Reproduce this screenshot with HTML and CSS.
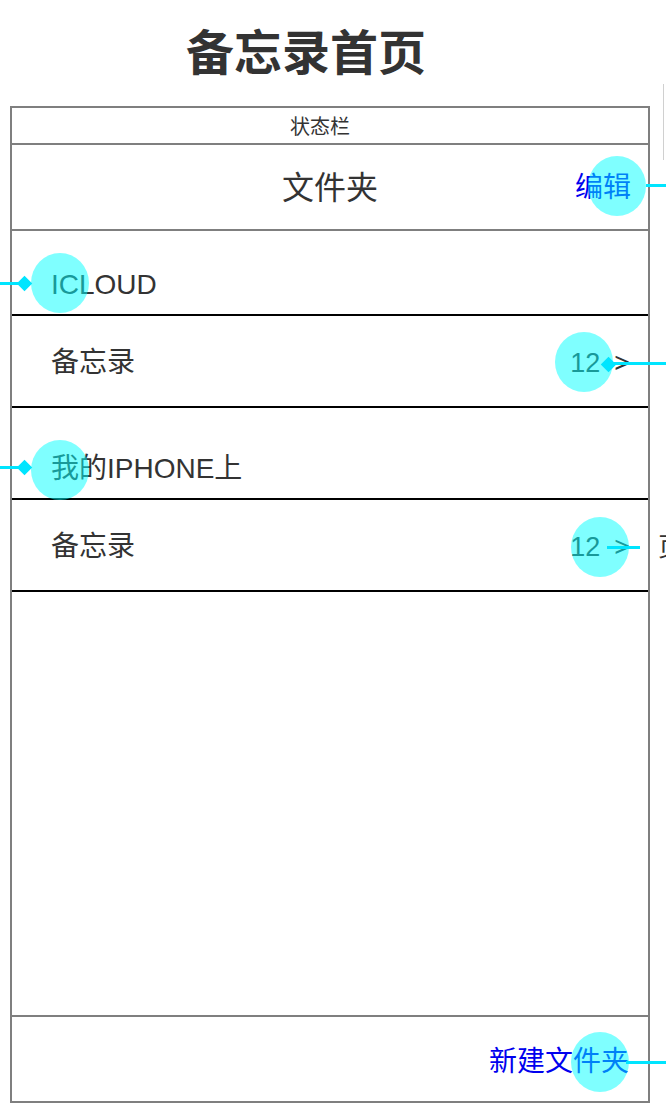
FILE: index.html
```html
<!DOCTYPE html>
<html lang="zh-CN">
<head>
<meta charset="utf-8">
<title>备忘录首页</title>
<link rel="stylesheet" href="styles.css">
</head>
<body>
  <h1 class="title">备忘录首页</h1>
  <div class="phone">
    <div class="status">状态栏</div>
    <div class="nav">
      <span class="nav-title">文件夹</span>
      <span class="nav-edit link">编辑</span>
    </div>
    <div class="section first">ICLOUD</div>
    <div class="row">
      <span class="row-label">备忘录</span>
      <span class="count">12<span class="chev">&gt;</span></span>
    </div>
    <div class="section">我的IPHONE上</div>
    <div class="row">
      <span class="row-label">备忘录</span>
      <span class="count">12<span class="chev">&gt;</span></span>
    </div>
    <div class="empty"></div>
    <div class="toolbar"><span class="link">新建文件夹</span></div>
  </div>

  <div class="ann ann-vline"></div>
  <div class="ann dot dot-edit"></div>
  <div class="ann line line-edit"></div>
  <div class="ann dot dot-icloud"></div>
  <div class="ann line line-icloud"></div>
  <div class="ann diamond diamond-icloud"></div>
  <div class="ann dot dot-row1"></div>
  <div class="ann line line-row1"></div>
  <div class="ann diamond diamond-row1"></div>
  <div class="ann dot dot-iphone"></div>
  <div class="ann line line-iphone"></div>
  <div class="ann diamond diamond-iphone"></div>
  <div class="ann dot dot-row2"></div>
  <div class="ann line line-row2"></div>
  <div class="ann dot dot-new"></div>
  <div class="ann line line-new"></div>
  <div class="ann side-note">页</div>
</body>
</html>
```

FILE: styles.css
```css
* {
  box-sizing: border-box;
}

html, body {
  margin: 0;
  padding: 0;
  background: #ffffff;
}

body {
  position: relative;
  width: 666px;
  height: 1116px;
  overflow: hidden;
  font-family: "Liberation Sans", "Noto Sans CJK SC", sans-serif;
  color: #333333;
}

.title {
  margin: 0;
  width: 612px;
  height: 106px;
  padding-top: 2px;
  text-align: center;
  font-size: 48px;
  line-height: 104px;
  font-weight: 700;
  color: #333333;
}

.phone {
  margin-left: 10px;
  width: 640px;
  height: 997px;
  border: 2px solid #7f7f7f;
  display: flex;
  flex-direction: column;
}

.status {
  height: 37px;
  border-bottom: 2px solid #7f7f7f;
  display: flex;
  align-items: center;
  justify-content: center;
  padding: 3px 20px 0 0;
  font-size: 20px;
  line-height: 20px;
}

.nav {
  height: 86px;
  border-bottom: 2px solid #7f7f7f;
  display: grid;
  grid-template-columns: 1fr auto 1fr;
  align-items: center;
  padding-top: 2px;
}

.nav-title {
  grid-column: 2;
  font-size: 32px;
  line-height: 32px;
}

.nav-edit {
  grid-column: 3;
  justify-self: end;
  padding-right: 17px;
  font-size: 28px;
  line-height: 28px;
}

.link {
  color: #0000ee;
}

.section {
  height: 92px;
  border-bottom: 2px solid #000000;
  display: flex;
  align-items: flex-end;
  padding: 0 0 15px 39px;
  font-size: 28px;
  line-height: 28px;
}

.section.first {
  height: 85px;
}

.row {
  height: 92px;
  border-bottom: 2px solid #000000;
  display: flex;
  align-items: center;
  justify-content: space-between;
  padding: 4px 18px 0 39px;
  font-size: 28px;
  line-height: 28px;
}

.count {
  font-size: 27px;
  display: flex;
  align-items: baseline;
}

.chev {
  margin-left: 14px;
}

.empty {
  flex: 1;
  border-bottom: 2px solid #7f7f7f;
}

.toolbar {
  height: 84px;
  display: flex;
  align-items: center;
  justify-content: flex-end;
  padding: 5px 19px 0 0;
  font-size: 28px;
  line-height: 28px;
}

/* annotation overlay */
.ann {
  position: absolute;
}

.dot {
  width: 58px;
  height: 60px;
  border-radius: 50%;
  background: rgba(0, 255, 255, 0.5);
}

.line {
  height: 3px;
  background: #00e5ff;
}

.diamond {
  width: 11px;
  height: 11px;
  background: #00e5ff;
  transform: rotate(45deg);
}

.ann-vline {
  left: 663px;
  top: 84px;
  width: 1px;
  height: 76px;
  background: #d0d0d0;
}

.dot-edit { left: 588px; top: 156px; }
.line-edit { left: 646px; top: 184px; width: 20px; }

.dot-icloud { left: 31px; top: 253px; }
.line-icloud { left: 0; top: 282px; width: 24px; }
.diamond-icloud { left: 19px; top: 278px; }

.dot-row1 { left: 555px; top: 332px; }
.line-row1 { left: 610px; top: 362px; width: 56px; }
.diamond-row1 { left: 603px; top: 359px; }

.dot-iphone { left: 31px; top: 440px; }
.line-iphone { left: 0; top: 466px; width: 24px; }
.diamond-iphone { left: 19px; top: 462px; }

.dot-row2 { left: 571px; top: 517px; }
.line-row2 { left: 607px; top: 546px; width: 33px; }

.dot-new { left: 571px; top: 1032px; }
.line-new { left: 626px; top: 1061px; width: 40px; }

.side-note {
  left: 658px;
  top: 532px;
  font-size: 26px;
  line-height: 30px;
  color: #333333;
  white-space: nowrap;
}
```
